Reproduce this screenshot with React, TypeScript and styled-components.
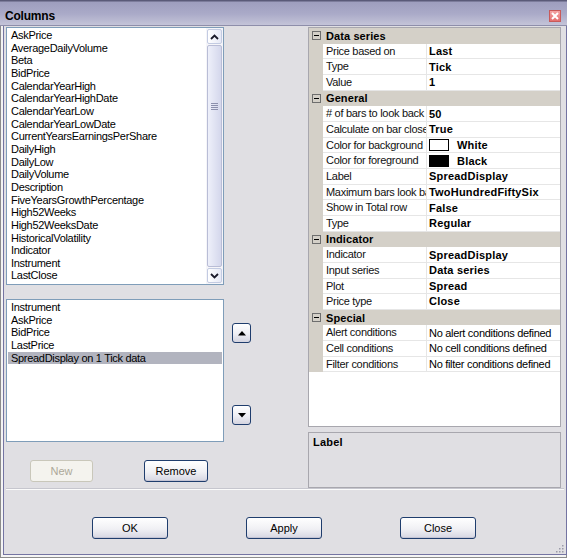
import React from 'react';
import styled, { createGlobalStyle } from 'styled-components';

const GlobalStyle = createGlobalStyle`
  html, body { margin: 0; padding: 0; background: #e0dfe3; }
  body { font-family: "Liberation Sans", Arial, sans-serif; font-size: 11px; color: #000; }
  * { box-sizing: border-box; }
`;

const availableColumns = [
  'AskPrice', 'AverageDailyVolume', 'Beta', 'BidPrice', 'CalendarYearHigh',
  'CalendarYearHighDate', 'CalendarYearLow', 'CalendarYearLowDate',
  'CurrentYearsEarningsPerShare', 'DailyHigh', 'DailyLow', 'DailyVolume',
  'Description', 'FiveYearsGrowthPercentage', 'High52Weeks', 'High52WeeksDate',
  'HistoricalVolatility', 'Indicator', 'Instrument', 'LastClose',
];

const selectedColumns = ['Instrument', 'AskPrice', 'BidPrice', 'LastPrice', 'SpreadDisplay on 1 Tick data'];

type GridRow =
  | { kind: 'cat'; label: string }
  | { kind: 'prop'; name: string; value: string; plain?: boolean; swatch?: string };

const gridRows: GridRow[] = [
  { kind: 'cat', label: 'Data series' },
  { kind: 'prop', name: 'Price based on', value: 'Last' },
  { kind: 'prop', name: 'Type', value: 'Tick' },
  { kind: 'prop', name: 'Value', value: '1' },
  { kind: 'cat', label: 'General' },
  { kind: 'prop', name: '# of bars to look back', value: '50' },
  { kind: 'prop', name: 'Calculate on bar close', value: 'True' },
  { kind: 'prop', name: 'Color for background', value: 'White', swatch: '#ffffff' },
  { kind: 'prop', name: 'Color for foreground', value: 'Black', swatch: '#000000' },
  { kind: 'prop', name: 'Label', value: 'SpreadDisplay' },
  { kind: 'prop', name: 'Maximum bars look back', value: 'TwoHundredFiftySix' },
  { kind: 'prop', name: 'Show in Total row', value: 'False' },
  { kind: 'prop', name: 'Type', value: 'Regular' },
  { kind: 'cat', label: 'Indicator' },
  { kind: 'prop', name: 'Indicator', value: 'SpreadDisplay' },
  { kind: 'prop', name: 'Input series', value: 'Data series' },
  { kind: 'prop', name: 'Plot', value: 'Spread' },
  { kind: 'prop', name: 'Price type', value: 'Close' },
  { kind: 'cat', label: 'Special' },
  { kind: 'prop', name: 'Alert conditions', value: 'No alert conditions defined', plain: true },
  { kind: 'prop', name: 'Cell conditions', value: 'No cell conditions defined', plain: true },
  { kind: 'prop', name: 'Filter conditions', value: 'No filter conditions defined', plain: true },
];

const Window = styled.div`
  width: 567px;
  height: 558px;
  display: flex;
  flex-direction: column;
  background: #e0dfe3;
  overflow: hidden;
`;

const TitleBar = styled.div`
  height: 26px;
  flex: none;
  display: flex;
  align-items: center;
  justify-content: space-between;
  padding: 6px 6px 0 5px;
  background: linear-gradient(#5a5a78 0, #5a5a78 1px, #9e9ebe 2px, #aaaac8 55%, #c4c4d8 100%);
  border-bottom: 1px solid #8e8eaa;
`;

const Title = styled.span`
  font-size: 12px;
  font-weight: bold;
  letter-spacing: -0.2px;
  color: #000;
`;

const CloseBox = styled.div`
  width: 12px;
  height: 12px;
  border: 1px solid #c85a5a;
  background: linear-gradient(#f4a4a4, #e46e6e);
  display: flex;
  align-items: center;
  justify-content: center;
`;

const Body = styled.div`
  flex: 1;
  display: flex;
  border: 1px solid #8c8c8c;
  border-top: none;
  padding: 0 2px 2px;
  background: #f4f4f4;
`;

const Frame = styled.div`
  flex: 1;
  display: flex;
  flex-direction: column;
  border: 1px solid #7474a2;
  border-top: none;
  background: #e0dfe3;
  padding: 1px 2px 0;
`;

const TopSection = styled.div`
  height: 462px;
  display: flex;
  border-bottom: 1px solid #c6c6ce;
`;

const LeftColumn = styled.div`
  width: 218px;
  display: flex;
  flex-direction: column;
`;

const MiddleColumn = styled.div`
  width: 84px;
  display: flex;
  flex-direction: column;
  padding: 296px 0 0 8px;
  gap: 62px;
`;

const RightColumn = styled.div`
  width: 253px;
  display: flex;
  flex-direction: column;
  gap: 5px;
`;

const ListBox = styled.div<{ $height: number }>`
  height: ${p => p.$height}px;
  display: flex;
  border: 1px solid #7f9db9;
  background: #fff;
`;

const ListItems = styled.div`
  flex: 1;
  padding: 1px;
  overflow: hidden;
`;

const ListItem = styled.div<{ $selected?: boolean }>`
  height: 12.66px;
  line-height: 12.66px;
  padding-left: 3px;
  white-space: nowrap;
  letter-spacing: -0.3px;
  background: ${p => (p.$selected ? '#b2b4bf' : 'transparent')};
`;

const ScrollTrack = styled.div`
  width: 17px;
  display: flex;
  flex-direction: column;
  gap: 1px;
  padding: 1px;
  background: #f5f5f9;
`;

const ScrollButton = styled.div`
  height: 15px;
  border: 1px solid #c3cbe2;
  border-radius: 2px;
  background: linear-gradient(90deg, #ffffff, #e6e9f6);
  display: flex;
  align-items: center;
  justify-content: center;
`;

const ScrollThumb = styled.div`
  flex: 1;
  border: 1px solid #b9bdd6;
  border-radius: 2px;
  background: linear-gradient(90deg, #eef0fa, #d4d7ec);
  display: flex;
  align-items: center;
  justify-content: center;
  padding-bottom: 100px;
`;

const Grip = styled.div`
  width: 7px;
  height: 7px;
  background: repeating-linear-gradient(#8c90ad 0, #8c90ad 1px, transparent 1px, transparent 2px);
`;

const ButtonRow = styled.div`
  display: flex;
  margin-top: 18px;
  padding-left: 24px;
  gap: 51px;
`;

const PushButton = styled.button<{ $width: number }>`
  width: ${p => p.$width}px;
  height: 22px;
  padding: 0;
  font-family: "Liberation Sans", Arial, sans-serif;
  font-size: 11px;
  color: #000;
  border: 1px solid #1f3d6d;
  border-radius: 3px;
  background: linear-gradient(#ffffff, #f0f0f4 55%, #d6d6e2);
  box-shadow: inset 0 -1px 0 #c4c4d4;

  &:disabled {
    color: #aca899;
    border-color: #c9c7ba;
    background: #f4f3ee;
    box-shadow: none;
  }
`;

const ArrowButton = styled.div`
  width: 19px;
  height: 20px;
  border: 1px solid #1f3d6d;
  border-radius: 3px;
  background: linear-gradient(#ffffff, #eeeef4 55%, #d4d4e0);
  display: flex;
  align-items: center;
  justify-content: center;
`;

const Grid = styled.div`
  height: 400px;
  border: 1px solid #a8a7ae;
  background: #fff;
  overflow: hidden;
`;

const CategoryRow = styled.div`
  height: 15.67px;
  display: flex;
  align-items: center;
  gap: 5px;
  padding-left: 3px;
  background: #d4d0c8;
  font-weight: bold;
  letter-spacing: 0.1px;
`;

const PropRow = styled.div`
  height: 15.67px;
  display: grid;
  grid-template-columns: 14px 104px 1fr;
`;

const Gutter = styled.div`
  background: #d4d0c8;
`;

const NameCell = styled.div`
  padding-left: 3px;
  line-height: 14.67px;
  white-space: nowrap;
  overflow: hidden;
  letter-spacing: -0.3px;
  color: #111;
  border-right: 1px solid #e6e6e6;
  border-bottom: 1px solid #e6e6e6;
`;

const ValueCell = styled.div<{ $plain?: boolean }>`
  display: flex;
  align-items: center;
  padding-left: 2px;
  white-space: nowrap;
  overflow: hidden;
  font-weight: ${p => (p.$plain ? 'normal' : 'bold')};
  letter-spacing: ${p => (p.$plain ? '-0.3px' : '0.2px')};
  border-bottom: 1px solid #e6e6e6;
`;

const Swatch = styled.span<{ $color: string }>`
  width: 20px;
  height: 12px;
  margin-right: 8px;
  border: 1px solid #000;
  background: ${p => p.$color};
`;

const DescriptionPanel = styled.div`
  height: 56px;
  border: 1px solid #a8a7ae;
  padding: 3px 4px;
  font-weight: bold;
  letter-spacing: 0.2px;
`;

const Footer = styled.div`
  flex: 1;
  display: flex;
  border-top: 1px solid #fbfbfb;
  padding: 27px 0 0 86px;
  gap: 78px;
`;

const ResizeGrip = styled.svg`
  margin-left: auto;
  align-self: flex-end;
  margin-bottom: 1px;
`;

const Chevron = ({ down }: { down?: boolean }) => (
  <svg width="9" height="6" viewBox="0 0 9 6">
    <polyline
      points={down ? '1,1 4.5,4.5 8,1' : '1,5 4.5,1.5 8,5'}
      fill="none"
      stroke="#1a1a2a"
      strokeWidth="1.8"
    />
  </svg>
);

const Triangle = ({ down }: { down?: boolean }) => (
  <svg width="8" height="5" viewBox="0 0 8 5">
    <polygon points={down ? '0,0 8,0 4,4.5' : '0,4.5 8,4.5 4,0'} fill="#000" />
  </svg>
);

const CollapseBox = () => (
  <svg width="9" height="9" viewBox="0 0 9 9">
    <rect x="0.5" y="0.5" width="8" height="8" fill="none" stroke="#6e6e6e" />
    <line x1="2" y1="4.5" x2="7" y2="4.5" stroke="#000" />
  </svg>
);

export default function App() {
  return (
    <Window>
      <GlobalStyle />
      <TitleBar>
        <Title>Columns</Title>
        <CloseBox>
          <svg width="8" height="8" viewBox="0 0 8 8">
            <path d="M1 1 L7 7 M7 1 L1 7" stroke="#fff" strokeWidth="2" />
          </svg>
        </CloseBox>
      </TitleBar>
      <Body>
        <Frame>
          <TopSection>
            <LeftColumn>
              <ListBox $height={258}>
                <ListItems>
                  {availableColumns.map(c => (
                    <ListItem key={c}>{c}</ListItem>
                  ))}
                </ListItems>
                <ScrollTrack>
                  <ScrollButton><Chevron /></ScrollButton>
                  <ScrollThumb><Grip /></ScrollThumb>
                  <ScrollButton><Chevron down /></ScrollButton>
                </ScrollTrack>
              </ListBox>
              <div style={{ height: 14 }} />
              <ListBox $height={143}>
                <ListItems>
                  {selectedColumns.map((c, i) => (
                    <ListItem key={c} $selected={i === 4}>{c}</ListItem>
                  ))}
                </ListItems>
              </ListBox>
              <ButtonRow>
                <PushButton $width={63} disabled>New</PushButton>
                <PushButton $width={64}>Remove</PushButton>
              </ButtonRow>
            </LeftColumn>
            <MiddleColumn>
              <ArrowButton><Triangle /></ArrowButton>
              <ArrowButton><Triangle down /></ArrowButton>
            </MiddleColumn>
            <RightColumn>
              <Grid>
                {gridRows.map((r, i) =>
                  r.kind === 'cat' ? (
                    <CategoryRow key={i}>
                      <CollapseBox />
                      {r.label}
                    </CategoryRow>
                  ) : (
                    <PropRow key={i}>
                      <Gutter />
                      <NameCell>{r.name}</NameCell>
                      <ValueCell $plain={r.plain}>
                        {r.swatch && <Swatch $color={r.swatch} />}
                        {r.value}
                      </ValueCell>
                    </PropRow>
                  )
                )}
              </Grid>
              <DescriptionPanel>Label</DescriptionPanel>
            </RightColumn>
          </TopSection>
          <Footer>
            <PushButton $width={76}>OK</PushButton>
            <PushButton $width={76}>Apply</PushButton>
            <PushButton $width={76}>Close</PushButton>
            <ResizeGrip width="10" height="10" viewBox="0 0 10 10">
              {[[8, 2], [8, 5], [5, 5], [8, 8], [5, 8], [2, 8]].map(([x, y]) => (
                <rect key={`${x}-${y}`} x={x} y={y} width="1.5" height="1.5" fill="#9a9aa8" />
              ))}
            </ResizeGrip>
          </Footer>
        </Frame>
      </Body>
    </Window>
  );
}
